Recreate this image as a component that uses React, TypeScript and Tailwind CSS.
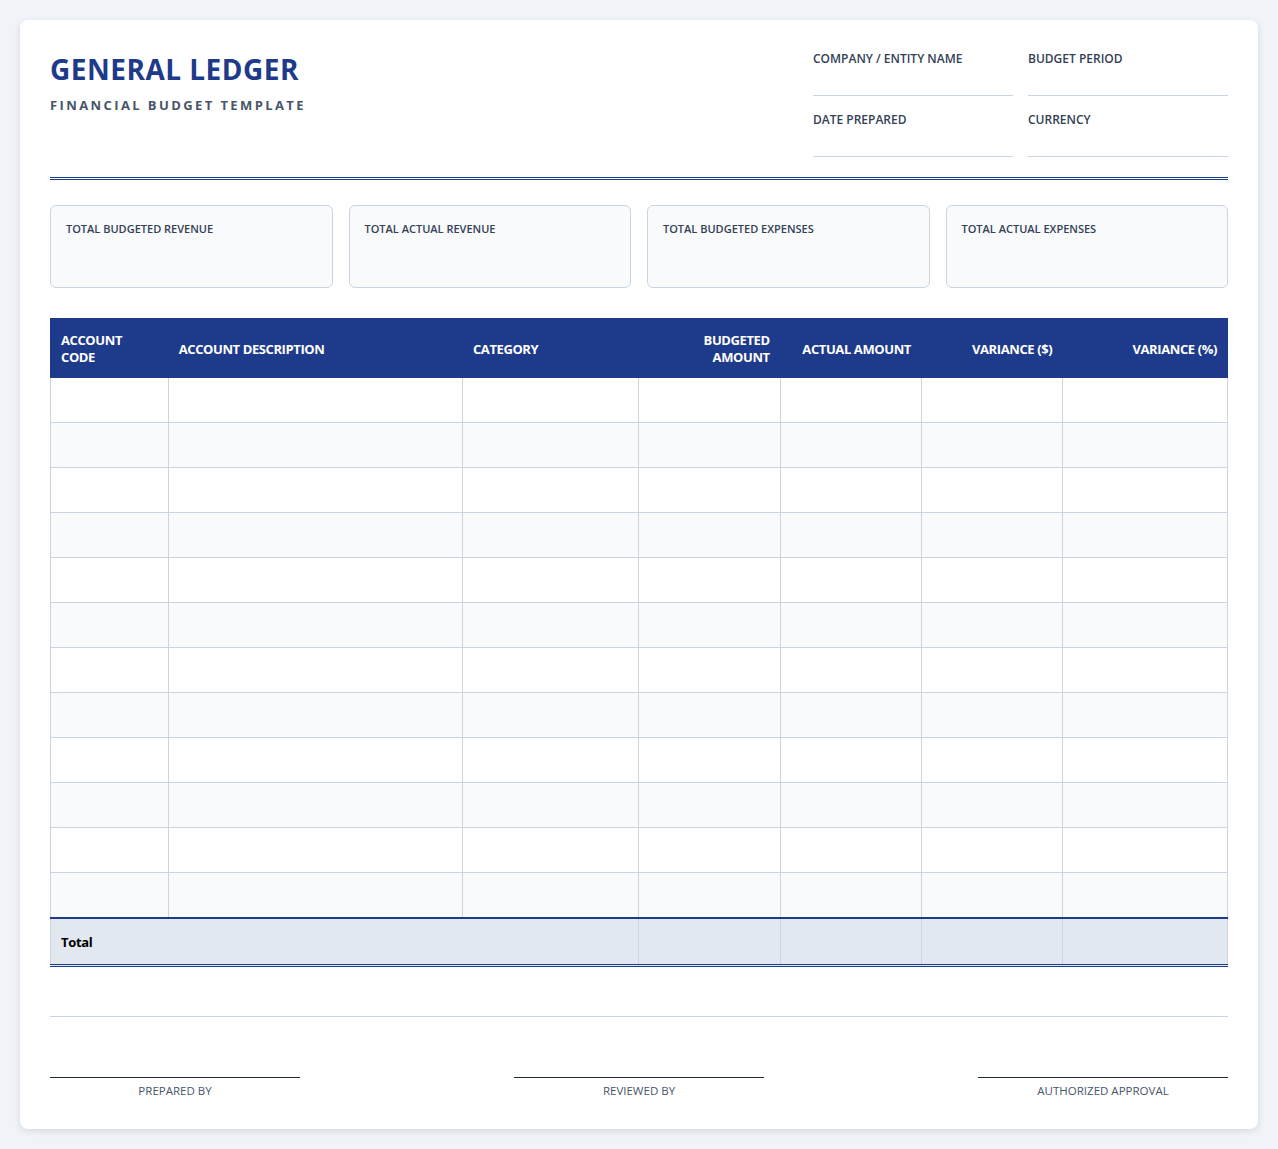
import React from "react";

const fields = ["COMPANY / ENTITY NAME", "BUDGET PERIOD", "DATE PREPARED", "CURRENCY"];

const summaries = [
    "TOTAL BUDGETED REVENUE",
    "TOTAL ACTUAL REVENUE",
    "TOTAL BUDGETED EXPENSES",
    "TOTAL ACTUAL EXPENSES",
];

const columns: { label: React.ReactNode; width: string; align: string }[] = [
    { label: <>ACCOUNT<br />CODE</>, width: "10%", align: "text-left" },
    { label: "ACCOUNT DESCRIPTION", width: "25%", align: "text-left" },
    { label: "CATEGORY", width: "15%", align: "text-left" },
    { label: <>BUDGETED<br />AMOUNT</>, width: "12%", align: "text-right" },
    { label: "ACTUAL AMOUNT", width: "12%", align: "text-right" },
    { label: "VARIANCE ($)", width: "12%", align: "text-right" },
    { label: "VARIANCE (%)", width: "14%", align: "text-right" },
];

const rows = Array.from({ length: 12 }, (_, i) => i);

const signatures = ["PREPARED BY", "REVIEWED BY", "AUTHORIZED APPROVAL"];

export default function App() {
    return (
        <div className="min-h-screen bg-[#f0f4f8] p-5 font-['Open_Sans',sans-serif]">
            <div className="rounded-lg bg-white p-[30px] shadow-[0_2px_6px_rgba(15,23,42,0.12)]">
                {/* header */}
                <div className="flex items-start justify-between border-b-[3px] border-double border-[#1e3a8a] pb-5">
                    <div>
                        <h1 className="text-[28px] font-bold leading-[38px] tracking-[0.5px] text-[#1e3a8a]">
                            GENERAL LEDGER
                        </h1>
                        <div className="mt-2 text-[13px] font-bold leading-[18px] tracking-[2.4px] text-[#475569]">
                            FINANCIAL BUDGET TEMPLATE
                        </div>
                    </div>
                    <div className="grid w-[415px] grid-cols-2 gap-[15px]">
                        {fields.map((f) => (
                            <div key={f} className="h-[46px] border-b border-[#cbd5e1]">
                                <div className="pt-[2px] text-xs font-semibold leading-[14px] text-[#334155]">{f}</div>
                            </div>
                        ))}
                    </div>
                </div>

                {/* summary cards */}
                <div className="mt-[25px] grid grid-cols-4 gap-4">
                    {summaries.map((s) => (
                        <div
                            key={s}
                            className="h-[83px] rounded-md border border-[#cbd5e1] bg-[#f8fafc] px-[15px] pt-[15px]"
                        >
                            <div className="text-[11px] font-semibold leading-[15px] text-[#334155]">{s}</div>
                        </div>
                    ))}
                </div>

                {/* ledger table */}
                <table className="mt-[30px] w-full table-fixed border-collapse">
                    <colgroup>
                        {columns.map((c, i) => (
                            <col key={i} style={{ width: c.width }} />
                        ))}
                    </colgroup>
                    <thead>
                        <tr className="bg-[#1e3a8a]">
                            {columns.map((c, i) => (
                                <th
                                    key={i}
                                    className={`h-[59px] border border-[#1e3a8a] px-[10px] pt-[2px] align-middle text-[13px] font-bold leading-[17px] tracking-[-0.4px] text-white ${c.align}`}
                                >
                                    {c.label}
                                </th>
                            ))}
                        </tr>
                    </thead>
                    <tbody>
                        {rows.map((r) => (
                            <tr key={r} className={r % 2 === 1 ? "bg-[#f8fafc]" : "bg-white"}>
                                {columns.map((_, i) => (
                                    <td key={i} className="h-[45px] border border-[#cbd5e1]" />
                                ))}
                            </tr>
                        ))}
                        <tr className="bg-[#e2e8f0]">
                            <td
                                colSpan={3}
                                className="h-[48px] border-x border-x-[#cbd5e1] border-t-2 border-t-[#1e3a8a] border-b-[3px] border-double border-b-[#1e3a8a] px-[10px] pt-[2px] text-[13px] font-bold tracking-[-0.3px] text-black"
                            >
                                Total
                            </td>
                            {[0, 1, 2, 3].map((i) => (
                                <td
                                    key={i}
                                    className="h-[48px] border-x border-x-[#cbd5e1] border-t-2 border-t-[#1e3a8a] border-b-[3px] border-double border-b-[#1e3a8a]"
                                />
                            ))}
                        </tr>
                    </tbody>
                </table>

                {/* signatures */}
                <div className="mt-[49px] flex justify-between border-t border-[#cbd5e1] pt-[60px]">
                    {signatures.map((s) => (
                        <div
                            key={s}
                            className="w-[250px] border-t border-[#1e293b] pt-[5px] text-center text-[11.5px] leading-4 text-[#475569]"
                        >
                            {s}
                        </div>
                    ))}
                </div>
            </div>
        </div>
    );
}
